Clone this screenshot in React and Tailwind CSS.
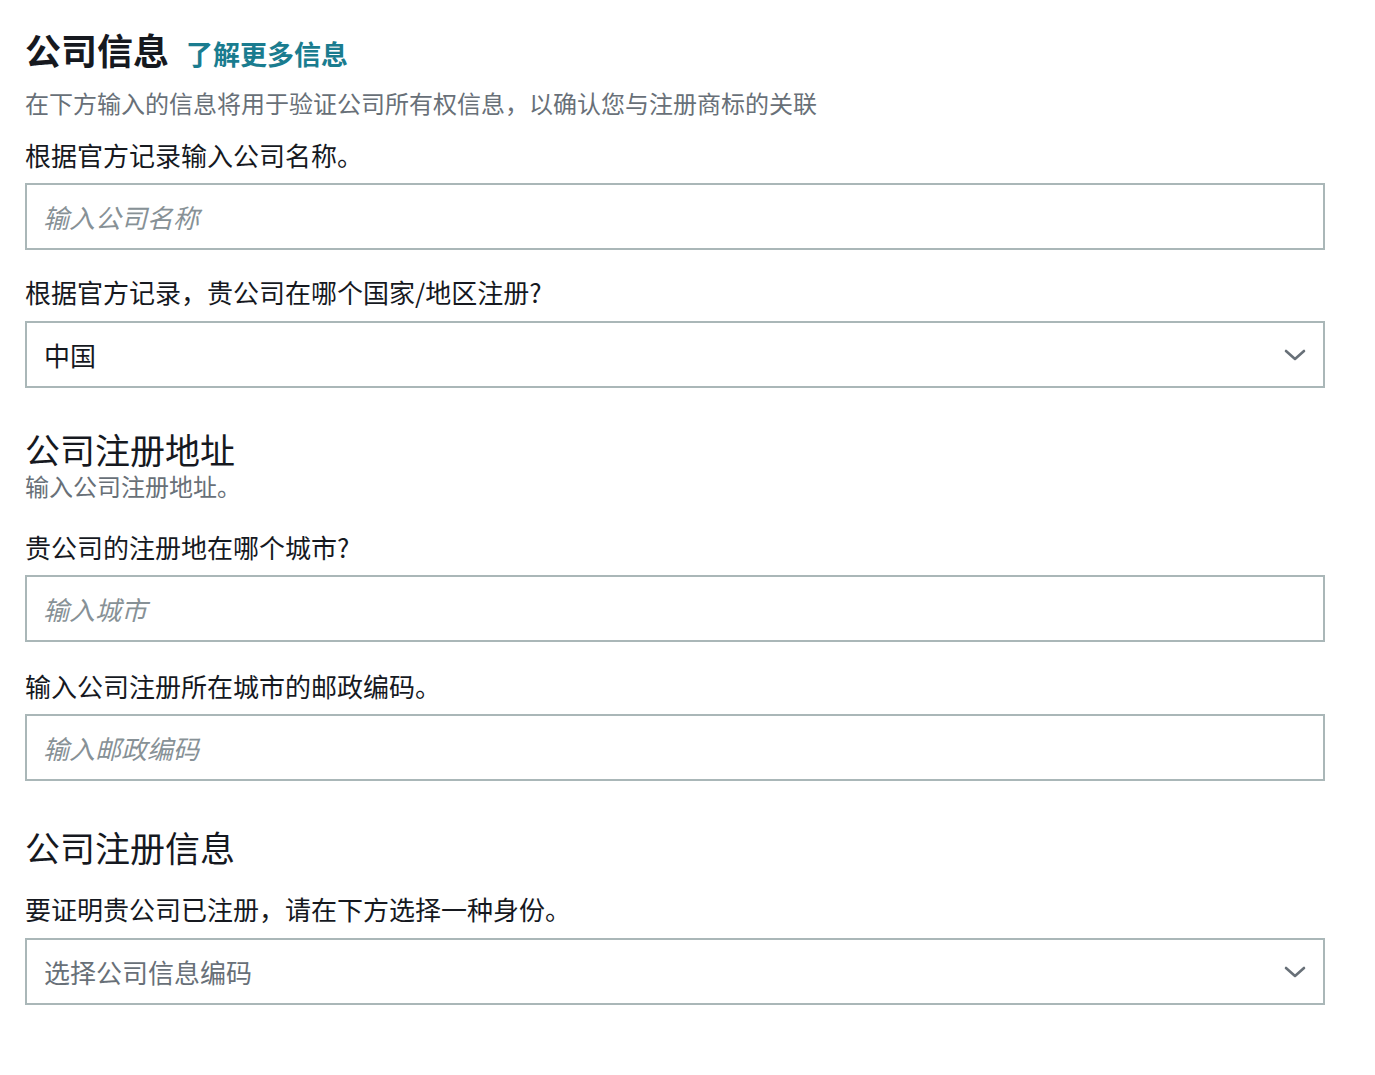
import { useState } from 'react';

const font = { fontFamily: '"Noto Sans CJK SC", "Noto Sans", sans-serif' };

function Chevron() {
  return (
    <svg width="22" height="14" viewBox="0 0 22 14" className="shrink-0">
      <polyline points="2,3 11,11 20,3" fill="none" stroke="#687078" strokeWidth="2.6" strokeLinecap="round" strokeLinejoin="round" />
    </svg>
  );
}

function TextInput({ placeholder, className = 'mt-[12px]' }) {
  const [value, setValue] = useState('');
  return (
    <input
      value={value}
      onChange={(e) => setValue(e.target.value)}
      placeholder={placeholder}
      className={`${className} block h-[67px] w-[1300px] border-2 border-[#aab7b8] bg-white px-[16px] text-[26px] text-[#16191f] outline-none placeholder:italic placeholder:text-[#879196]`}
      style={font}
    />
  );
}

function Select({ value, placeholder }) {
  return (
    <div className="mt-[13px] flex h-[67px] w-[1300px] items-center justify-between border-2 border-[#aab7b8] bg-white pl-[17px] pr-[17px]">
      {value ? (
        <span className="text-[26px] leading-[32px] text-[#16191f]">{value}</span>
      ) : (
        <span className="text-[26px] leading-[32px] text-[#687078]">{placeholder}</span>
      )}
      <Chevron />
    </div>
  );
}

function Label({ children, className = '' }) {
  return <div className={`text-[26px] leading-[32px] text-[#16191f] ${className}`}>{children}</div>;
}

export default function App() {
  return (
    <div className="min-h-screen bg-white pl-[25px] pt-[27px]" style={font}>
      <div className="flex items-baseline">
        <h1 className="text-[36px] font-bold leading-[44px] text-[#16191f]">公司信息</h1>
        <a href="#" className="ml-[17px] text-[27px] font-bold leading-[44px] text-[#1a7c8f]">了解更多信息</a>
      </div>
      <p className="mt-[11px] text-[24px] leading-[32px] text-[#687078]">
        在下方输入的信息将用于验证公司所有权信息，以确认您与注册商标的关联
      </p>

      <Label className="mt-[20px]">根据官方记录输入公司名称。</Label>
      <TextInput placeholder="输入公司名称" />

      <Label className="mt-[26px]">根据官方记录，贵公司在哪个国家/地区注册?</Label>
      <Select value="中国" />

      <h2 className="mt-[43px] text-[35px] leading-[36px] text-[#16191f]">公司注册地址</h2>
      <div className="mt-[5px] text-[24px] leading-[28px] text-[#687078]">输入公司注册地址。</div>

      <Label className="mt-[31px]">贵公司的注册地在哪个城市?</Label>
      <TextInput placeholder="输入城市" />

      <Label className="mt-[28px]">输入公司注册所在城市的邮政编码。</Label>
      <TextInput placeholder="输入邮政编码" />

      <h2 className="mt-[48px] text-[35px] leading-[36px] text-[#16191f]">公司注册信息</h2>

      <Label className="mt-[28px]">要证明贵公司已注册，请在下方选择一种身份。</Label>
      <Select placeholder="选择公司信息编码" />
    </div>
  );
}
